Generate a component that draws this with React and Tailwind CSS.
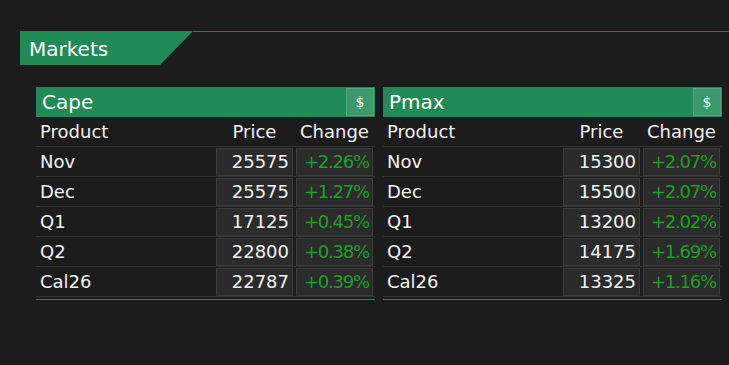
const markets = [
  {
    name: "Cape",
    rows: [
      { product: "Nov", price: "25575", change: "+2.26%" },
      { product: "Dec", price: "25575", change: "+1.27%" },
      { product: "Q1", price: "17125", change: "+0.45%" },
      { product: "Q2", price: "22800", change: "+0.38%" },
      { product: "Cal26", price: "22787", change: "+0.39%" },
    ],
  },
  {
    name: "Pmax",
    rows: [
      { product: "Nov", price: "15300", change: "+2.07%" },
      { product: "Dec", price: "15500", change: "+2.07%" },
      { product: "Q1", price: "13200", change: "+2.02%" },
      { product: "Q2", price: "14175", change: "+1.69%" },
      { product: "Cal26", price: "13325", change: "+1.16%" },
    ],
  },
];

const MarketTable = ({ data }) => {
  return (
    <div className="w-[339px]">
      <div className="flex items-center justify-between h-[30px] bg-[#208b57]">
        <span className="pl-[6px] text-[20px] text-white leading-none">{data.name}</span>
        <div className="flex items-center justify-center w-[28px] h-[28px] mr-[1px] bg-[#3a9a6b] border border-[#50a97c] text-[14px] text-white">
          $
        </div>
      </div>

      <div className="flex items-center h-[30px] border-b border-[#333333] text-[18px] text-[#f2f2f2]">
        <div className="flex-1 pl-[4px]">Product</div>
        <div className="w-[77px] text-center">Price</div>
        <div className="w-[77px] ml-[3px] mr-[2px] text-center">Change</div>
      </div>

      {data.rows.map((row) => (
        <div
          key={row.product}
          className="flex items-center h-[30px] border-b border-[#333333] text-[18px] text-[#f2f2f2]"
        >
          <div className="flex-1 pl-[4px]">{row.product}</div>
          <div className="flex items-center justify-end w-[77px] h-[28px] pr-[3px] bg-[#2b2b2b] border border-[#3c3c3c]">
            {row.price}
          </div>
          <div className="flex items-center justify-end w-[77px] h-[28px] ml-[3px] mr-[2px] pr-[3px] bg-[#2b2b2b] border border-[#3c3c3c] text-[#1f9e24] tracking-[-1.2px]">
            {row.change}
          </div>
        </div>
      ))}

      <div className="mt-[2px] h-[1px] bg-[#2e7d56]" />
    </div>
  );
};

const App = () => {
  return (
    <div
      className="w-full h-[365px] bg-[#1c1c1c] pt-[31px]"
      style={{ fontFamily: '"DejaVu Sans", sans-serif' }}
    >
      <div className="flex ml-[20px]">
        <div className="flex items-center w-[173px] h-[34px] pl-[9px] pt-[1px] bg-[#208b57] text-[20px] text-white [clip-path:polygon(0_0,100%_0,calc(100%-33px)_100%,0_100%)]">
          Markets
        </div>
        <div className="flex-1 h-[1px] bg-[#2b7a52]" />
      </div>

      <div className="flex gap-[8px] ml-[36px] mt-[22px]">
        {markets.map((m) => (
          <MarketTable key={m.name} data={m} />
        ))}
      </div>
    </div>
  );
};

export default App;
